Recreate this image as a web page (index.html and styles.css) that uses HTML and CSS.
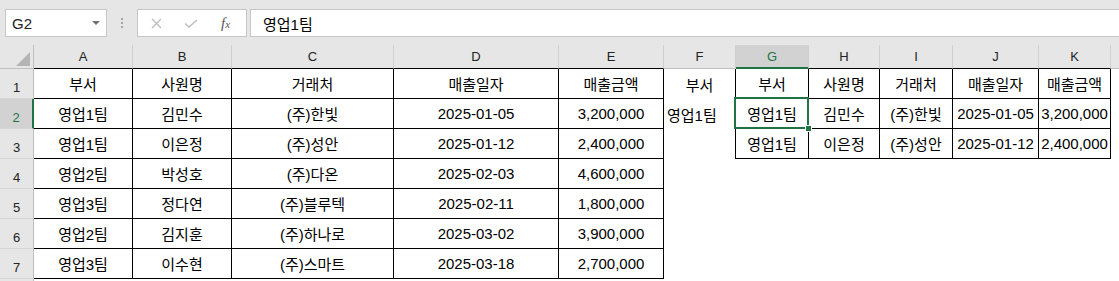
FILE: index.html
```html
<!DOCTYPE html>
<html lang="ko">
<head>
    <meta charset="UTF-8">
    <meta name="viewport" content="width=device-width, initial-scale=1.0">
    <title>매출 필터</title>
    <link rel="stylesheet" href="styles.css">
</head>
<body>
    <div class="formula-bar">
        <div class="name-box">
            <span>G2</span>
            <svg class="drop" viewBox="0 0 8 4" width="8" height="4"><path d="M0 0h8L4 4z"/></svg>
        </div>
        <div class="grip"><i></i><i></i><i></i></div>
        <div class="fx-box">
            <svg class="cancel" viewBox="0 0 11 11" width="11" height="11"><path d="M1 1l9 9M10 1l-9 9"/></svg>
            <svg class="enter" viewBox="0 0 14 9" width="14" height="9"><path d="M1 4.5l4 3.5l8-7"/></svg>
            <span class="fx">f<small>x</small></span>
        </div>
        <div class="formula-input">영업1팀</div>
    </div>

    <div class="sheet">
        <!-- column headers -->
        <div class="corner"><svg viewBox="0 0 14 14" width="14" height="14"><path d="M14 0V14H0z"/></svg></div>
        <div class="ch tb">A</div>
        <div class="ch tb">B</div>
        <div class="ch tb">C</div>
        <div class="ch tb">D</div>
        <div class="ch tb">E</div>
        <div class="ch">F</div>
        <div class="ch sel">G</div>
        <div class="ch tb">H</div>
        <div class="ch tb">I</div>
        <div class="ch tb">J</div>
        <div class="ch tb">K</div>
        <div class="ch last"></div>

        <!-- row 1 -->
        <div class="rh">1</div>
        <div class="c b">부서</div>
        <div class="c b">사원명</div>
        <div class="c b">거래처</div>
        <div class="c b">매출일자</div>
        <div class="c b">매출금액</div>
        <div class="c fb">부서</div>
        <div class="c b">부서</div>
        <div class="c b">사원명</div>
        <div class="c b">거래처</div>
        <div class="c b">매출일자</div>
        <div class="c b">매출금액</div>
        <div class="c"></div>

        <!-- row 2 -->
        <div class="rh sel">2</div>
        <div class="c b">영업1팀</div>
        <div class="c b">김민수</div>
        <div class="c b">(주)한빛</div>
        <div class="c b">2025-01-05</div>
        <div class="c b">3,200,000</div>
        <div class="c fb left">영업1팀</div>
        <div class="c b active">영업1팀<span class="cursor"></span></div>
        <div class="c b">김민수</div>
        <div class="c b">(주)한빛</div>
        <div class="c b">2025-01-05</div>
        <div class="c b">3,200,000</div>
        <div class="c"></div>

        <!-- row 3 -->
        <div class="rh">3</div>
        <div class="c b">영업1팀</div>
        <div class="c b">이은정</div>
        <div class="c b">(주)성안</div>
        <div class="c b">2025-01-12</div>
        <div class="c b">2,400,000</div>
        <div class="c fb"></div>
        <div class="c b">영업1팀</div>
        <div class="c b">이은정</div>
        <div class="c b">(주)성안</div>
        <div class="c b">2025-01-12</div>
        <div class="c b">2,400,000</div>
        <div class="c"></div>

        <!-- row 4 -->
        <div class="rh">4</div>
        <div class="c b">영업2팀</div>
        <div class="c b">박성호</div>
        <div class="c b">(주)다온</div>
        <div class="c b">2025-02-03</div>
        <div class="c b">4,600,000</div>
        <div class="c"></div><div class="c"></div><div class="c"></div><div class="c"></div><div class="c"></div><div class="c"></div><div class="c"></div>

        <!-- row 5 -->
        <div class="rh">5</div>
        <div class="c b">영업3팀</div>
        <div class="c b">정다연</div>
        <div class="c b">(주)블루텍</div>
        <div class="c b">2025-02-11</div>
        <div class="c b">1,800,000</div>
        <div class="c"></div><div class="c"></div><div class="c"></div><div class="c"></div><div class="c"></div><div class="c"></div><div class="c"></div>

        <!-- row 6 -->
        <div class="rh">6</div>
        <div class="c b">영업2팀</div>
        <div class="c b">김지훈</div>
        <div class="c b">(주)하나로</div>
        <div class="c b">2025-03-02</div>
        <div class="c b">3,900,000</div>
        <div class="c"></div><div class="c"></div><div class="c"></div><div class="c"></div><div class="c"></div><div class="c"></div><div class="c"></div>

        <!-- row 7 -->
        <div class="rh">7</div>
        <div class="c b">영업3팀</div>
        <div class="c b">이수현</div>
        <div class="c b">(주)스마트</div>
        <div class="c b">2025-03-18</div>
        <div class="c b">2,700,000</div>
        <div class="c"></div><div class="c"></div><div class="c"></div><div class="c"></div><div class="c"></div><div class="c"></div><div class="c"></div>

        <!-- row 8 (cut off) -->
        <div class="rh"></div>
    </div>
</body>
</html>
```

FILE: styles.css
```css
body {
    margin: 0;
    width: 1119px;
    height: 281px;
    overflow: hidden;
    background: #fff;
    font-family: "Liberation Sans", "Noto Sans CJK KR", sans-serif;
    color: #000;
}

/* formula bar */
.formula-bar {
    height: 45px;
    box-sizing: border-box;
    padding-top: 9px;
    background: #e6e6e6;
    display: flex;
    align-items: flex-start;
}
.name-box {
    margin-left: 5px;
    width: 102px;
    height: 28px;
    box-sizing: border-box;
    border: 1px solid #c6c6c6;
    background: #fff;
    display: flex;
    align-items: center;
    justify-content: space-between;
    padding: 0 6px 0 6px;
    font-size: 15px;
    color: #222;
}
.drop {
    fill: #707070;
}
.grip {
    width: 30px;
    padding-top: 9px;
    display: flex;
    flex-direction: column;
    align-items: center;
    gap: 2px;
}
.grip i {
    width: 2px;
    height: 2px;
    background: #a6a6a6;
}
.fx-box {
    width: 110px;
    height: 28px;
    box-sizing: border-box;
    border: 1px solid #c6c6c6;
    background: #fff;
    display: flex;
    align-items: center;
    padding-left: 13px;
}
.cancel, .enter {
    fill: none;
    stroke: #bdbdbd;
    stroke-width: 1.4;
}
.enter {
    margin-left: 22px;
}
.fx {
    margin-left: 23px;
    font-family: "Liberation Serif", serif;
    font-style: italic;
    font-size: 15px;
    color: #555;
}
.fx small {
    font-size: 11px;
}
.formula-input {
    flex: 1;
    margin-left: 3px;
    height: 28px;
    box-sizing: border-box;
    border: 1px solid #c6c6c6;
    border-right: none;
    background: #fff;
    padding-left: 12px;
    display: flex;
    align-items: center;
    font-size: 15px;
}

/* sheet grid */
.sheet {
    display: grid;
    grid-template-columns: 34px 99px 99px 162px 165px 105px 72px 73px 71px 73px 86px 72px 1fr;
    grid-template-rows: 24px repeat(7, 30px) 1fr;
    height: 236px;
}
.corner {
    background: #e6e6e6;
    border-right: 1px solid #bfbfbf;
    border-bottom: 1px solid #bfbfbf;
    display: flex;
    align-items: flex-end;
    justify-content: flex-end;
    padding: 0 3px 2px 0;
}
.corner svg {
    fill: #b4b4b4;
}
.ch {
    background: #e6e6e6;
    border-right: 1px solid #cfcfcf;
    border-bottom: 1px solid #bfbfbf;
    display: flex;
    align-items: center;
    justify-content: center;
    font-size: 13px;
    color: #222;
}
.ch.tb {
    border-bottom-color: #000;
}
.ch.sel {
    background: #d2d2d2;
    color: #217346;
    border-bottom: 2px solid #217346;
}
.ch.last {
    border-right: none;
}
.rh {
    background: #e6e6e6;
    border-right: 1px solid #bfbfbf;
    border-bottom: 1px solid #d6d6d6;
    display: flex;
    align-items: flex-end;
    justify-content: center;
    padding-bottom: 3px;
    font-size: 13px;
    color: #222;
}
.rh.sel {
    background: #d2d2d2;
    color: #217346;
    border-right: 2px solid #217346;
}

.c {
    display: flex;
    align-items: center;
    justify-content: center;
    font-size: 15px;
    white-space: nowrap;
}
.c.b {
    border-right: 1px solid #000;
    border-bottom: 1px solid #000;
}
.c.fb {
    border-right: 1px solid #000;
}
.c.left {
    justify-content: flex-start;
    padding-left: 3px;
}
.c.active {
    position: relative;
}
.cursor {
    position: absolute;
    left: -2px;
    top: -2px;
    right: -1px;
    bottom: -1px;
    border: 2px solid #217346;
}
.cursor::after {
    content: "";
    position: absolute;
    right: -5px;
    bottom: -5px;
    width: 5px;
    height: 5px;
    background: #217346;
    border: 1px solid #fff;
}
```
